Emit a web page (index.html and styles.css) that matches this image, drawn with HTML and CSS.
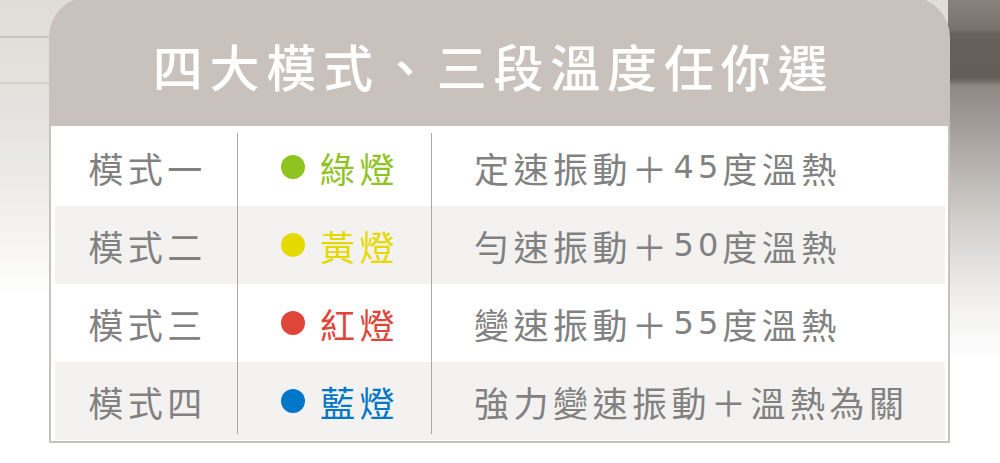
FILE: index.html
```html
<!DOCTYPE html>
<html lang="zh-Hant">
<head>
<meta charset="utf-8">
<title>四大模式、三段溫度任你選</title>
<link rel="stylesheet" href="styles.css">
</head>
<body>
<div class="page">
  <section class="card">
    <header class="card-head">
      <h1 class="title">四大模式、三段溫度任你選</h1>
    </header>
    <div class="table">
      <div class="rows">
        <div class="row">
          <div class="cell mode">模式一</div>
          <div class="cell light green"><span class="dot"></span><span class="lbl">綠燈</span></div>
          <div class="cell desc">定速振動＋<span class="num">45</span>度溫熱</div>
        </div>
        <div class="row alt">
          <div class="cell mode">模式二</div>
          <div class="cell light yellow"><span class="dot"></span><span class="lbl">黃燈</span></div>
          <div class="cell desc">勻速振動＋<span class="num">50</span>度溫熱</div>
        </div>
        <div class="row">
          <div class="cell mode">模式三</div>
          <div class="cell light red"><span class="dot"></span><span class="lbl">紅燈</span></div>
          <div class="cell desc">變速振動＋<span class="num">55</span>度溫熱</div>
        </div>
        <div class="row alt">
          <div class="cell mode">模式四</div>
          <div class="cell light blue"><span class="dot"></span><span class="lbl">藍燈</span></div>
          <div class="cell desc">強力變速振動＋溫熱為關</div>
        </div>
      </div>
    </div>
  </section>
</div>
</body>
</html>
```

FILE: styles.css
```css
html, body {
  margin: 0;
  padding: 0;
}

body {
  width: 1000px;
  height: 463px;
  overflow: hidden;
  font-family: "Noto Sans CJK TC", "Noto Sans", sans-serif;
  background:
    linear-gradient(to bottom, rgba(255,255,255,0) 0, rgba(255,255,255,0) 36px, rgba(190,185,180,0.7) 36px, rgba(190,185,180,0.7) 38px, rgba(255,255,255,0) 38px),
    linear-gradient(to bottom, rgba(255,255,255,0) 0, rgba(255,255,255,0) 82px, rgba(200,196,192,0.5) 82px, rgba(200,196,192,0.5) 84px, rgba(255,255,255,0) 84px),
    linear-gradient(to bottom, #e0ddd9 0, #e5e2df 120px, #f2f1ef 220px, #ffffff 300px);
  background-size: 60px 100%, 60px 100%, 100% 100%;
  background-repeat: no-repeat;
}

.page {
  height: 463px;
  background:
    linear-gradient(to bottom, #8a827d 0, #7a726d 28px, #67605b 34px, #645c57 78px, #8f8883 86px, #aaa5a1 140px, #d2cfcc 220px, #f1f0ef 300px, #ffffff 360px)
    right top / 52px 100% no-repeat;
  overflow: hidden;
}

.card {
  margin: -3px 0 0 49px;
  width: 901px;
  border-radius: 40px 40px 0 0;
  background: #c9c1bb;
}

.card-head {
  height: 129px;
  display: flex;
  align-items: center;
  justify-content: center;
  padding: 7px 12px 0 0;
  box-sizing: border-box;
}

.title {
  margin: 0;
  font-size: 50px;
  line-height: 1;
  font-weight: 500;
  letter-spacing: 6.8px;
  color: #ffffff;
}

.table {
  border: 2px solid #c9c1bb;
  border-top: none;
  background: #ffffff;
  padding: 2px 3px 1px 4px;
}

.rows {
  position: relative;
}

.rows::before,
.rows::after {
  content: "";
  position: absolute;
  top: 5px;
  bottom: 6px;
  width: 1px;
  background: #a9a9a9;
}

.rows::before { left: 182px; }
.rows::after { left: 376px; }

.row {
  display: grid;
  grid-template-columns: 182px 194px 1fr;
  height: 78px;
}

.row.alt {
  background: #f3f2f0;
}

.cell {
  display: flex;
  align-items: center;
  font-size: 35px;
  line-height: 1;
  letter-spacing: 4.5px;
  color: #818181;
  font-weight: 400;
}

.mode {
  justify-content: center;
  padding-left: 3px;
}

.light {
  justify-content: center;
  padding-left: 12px;
  gap: 15px;
}

.dot {
  width: 24px;
  height: 24px;
  border-radius: 50%;
  flex: none;
}

.desc {
  padding-left: 43px;
}

.num {
  font-family: "DejaVu Sans", "Liberation Sans", sans-serif;
  font-size: 32px;
  letter-spacing: 4px;
  padding-left: 2px;
}

.green .dot { background: #8fc31f; }
.green .lbl { color: #8fc31f; }
.yellow .dot { background: #e5da00; }
.yellow .lbl { color: #e5da00; }
.red .dot { background: #e0453a; }
.red .lbl { color: #e0453a; }
.blue .dot { background: #0077c8; }
.blue .lbl { color: #0077c8; }
```
